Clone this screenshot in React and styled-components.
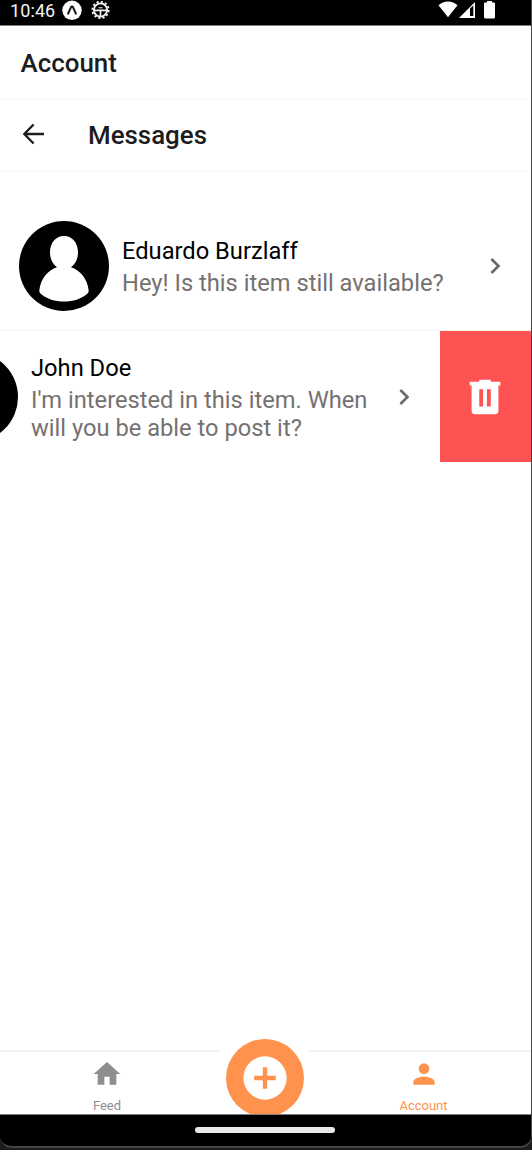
import React from "react";
import styled, { createGlobalStyle } from "styled-components";

const Global = createGlobalStyle`
  * { box-sizing: border-box; }
  body { margin: 0; background: #1c1c1c; font-family: Roboto, "Liberation Sans", sans-serif; }
  svg { display: block; flex: none; }
`;

const Phone = styled.div`
  width: 532px;
  height: 1148px;
  display: flex;
  flex-direction: column;
  overflow: hidden;
  background: #000;
  border: solid #444;
  border-width: 0 1px 2px 0;
  border-radius: 0 0 12px 12px;
`;

const StatusBar = styled.div`
  flex: none;
  height: 25px;
  display: flex;
  align-items: flex-start;
  padding: 0 36px 0 10px;
  color: #f4f4f4;
  background: #000;
`;

const Clock = styled.span`
  width: 52px;
  font-size: 18px;
  line-height: 22px;
  letter-spacing: 0.1px;
  white-space: nowrap;
`;

const StatusGroup = styled.div`
  display: flex;
  gap: ${(p) => p.$gap}px;
  margin-left: ${(p) => (p.$end ? "auto" : 0)};
`;

const Screen = styled.main`
  flex: 1;
  min-height: 0;
  display: flex;
  flex-direction: column;
  background: #fff;
  border-top: 1px solid #808080;
`;

const Header = styled.header`
  flex: none;
  height: ${(p) => p.$height}px;
  display: flex;
  align-items: center;
  gap: 39.5px;
  padding: ${(p) => p.$top || 0}px 20px 0 20.5px;
  border-bottom: 2px solid #fafafa;
`;

const Title = styled.h1`
  margin: 0;
  font-size: 25.9px;
  line-height: 32px;
  font-weight: 500;
  color: #1c1c1e;
`;

const List = styled.div`
  flex: 1;
  padding-top: 28px;
`;

const Row = styled.div`
  height: 131px;
  display: flex;
  overflow: hidden;
  border-bottom: ${(p) => (p.$last ? "none" : "1px solid #f6f6f6")};
`;

const Item = styled.div`
  flex: none;
  width: 531px;
  height: 131px;
  margin-left: ${(p) => (p.$swiped ? "-91px" : 0)};
  display: flex;
  align-items: center;
  padding: 0 20px 0 19px;
`;

const Details = styled.div`
  flex: 1;
  padding: 0 8px 0 13px;
  font-size: 23.7px;
  font-weight: 400;
`;

const Name = styled.div`
  color: #000;
  line-height: 32px;
`;

const Message = styled.div`
  color: #767171;
  line-height: 28px;
  padding-top: 2px;
`;

const DeleteAction = styled.button`
  flex: none;
  width: 91px;
  height: 131px;
  padding: 0 1px 0 0;
  border: 0;
  display: flex;
  align-items: center;
  justify-content: center;
  color: #fff;
  background: #ff5252;
`;

const TabBar = styled.nav`
  flex: none;
  height: 64px;
  display: flex;
  background: #fff;
`;

const Tab = styled.div`
  width: ${(p) => p.$width}px;
  display: flex;
  flex-direction: column;
  align-items: center;
  padding-top: 6px;
  padding-${(p) => p.$shift}: 7px;
  border-top: 2px solid #f3f3f3;
  color: ${(p) => (p.$active ? "#ff924c" : "#8e8e8e")};
`;

const TabLabel = styled.span`
  margin-top: 8px;
  font-size: 13px;
  line-height: 16px;
`;

const AddSlot = styled.div`
  width: 88px;
  display: flex;
  justify-content: center;
`;

const AddButton = styled.button`
  flex: none;
  width: 78px;
  height: 78px;
  margin-top: -11px;
  padding: 0;
  border: 0;
  border-radius: 50%;
  display: flex;
  align-items: center;
  justify-content: center;
  color: #fff;
  background: #ff924c;
`;

const GestureBar = styled.div`
  flex: none;
  position: relative;
  height: 32px;
  display: flex;
  justify-content: center;
  padding: 12px 2px 0 0;
  background: #000;
  border-top: 1px solid #808080;
`;

const Handle = styled.div`
  width: 140px;
  height: 6px;
  border-radius: 3px;
  background: #e8e8e8;
`;

const paths = {
  chevron: "M8.59,16.58L13.17,12L8.59,7.41L10,6L16,12L10,18L8.59,16.58Z",
  trash:
    "M9,3V4H4V6H5V19A2,2 0 0,0 7,21H17A2,2 0 0,0 19,19V6H20V4H15V3H9M9,8H11V17H9V8M13,8H15V17H13V8Z",
  home: "M10,20V14H14V20H19V12H22L12,3L2,12H5V20H10Z",
  account:
    "M12,4A4,4 0 0,1 16,8A4,4 0 0,1 12,12A4,4 0 0,1 8,8A4,4 0 0,1 12,4M12,14C16.42,14 20,15.79 20,18V20H4V18C4,15.79 7.58,14 12,14Z",
  plusCircle:
    "M17,13H13V17H11V13H7V11H11V7H13V11H17M12,2A10,10 0 0,0 2,12A10,10 0 0,0 12,22A10,10 0 0,0 22,12A10,10 0 0,0 12,2Z",
};

const Icon = ({ name, size, color = "currentColor" }) => (
  <svg width={size} height={size} viewBox="0 0 24 24" fill={color}>
    <path d={paths[name]} />
  </svg>
);

const BackArrow = () => (
  <svg width="28" height="28" viewBox="0 0 28 28" fill="none" stroke="#1c1c1e" strokeWidth="2.3">
    <path d="M23 13H4M12.6 3.5L3.3 13L12.6 22.5" />
  </svg>
);

const Avatar = () => (
  <svg width="90" height="90" viewBox="0 0 90 90">
    <circle cx="45" cy="45" r="45" fill="#000" />
    <path
      fill="#fff"
      d="M45 15C36.5 15 31 22 31 31.5C31 38 33.8 43 38 46.3C29 49 21.5 58 20.3 69.5C20.3 71 20.8 72 22 73C28 78 36 80.6 45 80.6C54 80.6 62 78 68 73C69.2 72 69.7 71 69.7 69.5C68.5 58 61 49 52 46.3C56.2 43 59 38 59 31.5C59 22 53.5 15 45 15Z"
    />
  </svg>
);

const ExpoBadge = () => (
  <svg width="20" height="21" viewBox="0 0 20 21">
    <circle cx="10" cy="10.3" r="9.7" fill="#fff" />
    <path d="M5.8 14.3L9 7.2Q10 5.6 11 7.2L14.2 14.3" fill="none" stroke="#111" strokeWidth="2" />
  </svg>
);

const GearBadge = () => (
  <svg width="20" height="20" viewBox="0 0 20 20" fill="none" stroke="#f4f4f4">
    <circle cx="9.5" cy="10" r="6.6" strokeWidth="1.9" />
    <circle cx="9.5" cy="10" r="8.2" strokeWidth="1.8" strokeDasharray="2.2 2.093" />
    <path d="M3.5 10.3H15.5M9.5 10.3V16" strokeWidth="1.7" />
    <path d="M7.5 7.8H11.5" strokeWidth="1" />
  </svg>
);

const Wifi = () => (
  <svg width="20" height="18" viewBox="0 0 20 18" fill="#fff">
    <path d="M0.5 5.3C5.5 0.2 14.5 0.2 19.5 5.3L10 17.3Z" />
  </svg>
);

const Signal = () => (
  <svg width="16" height="18" viewBox="0 0 16 18">
    <path d="M0 18L16 2V18Z" fill="#fff" />
    <path d="M11 8.5L14.3 5.5V16H11Z" fill="#000" />
  </svg>
);

const Battery = () => (
  <svg width="11" height="19" viewBox="0 0 11 19" fill="#fff">
    <path d="M3 1H8V2.5H10Q11 2.5 11 3.5V17Q11 18.5 9.5 18.5H1.5Q0 18.5 0 17V3.5Q0 2.5 1 2.5H3Z" />
  </svg>
);

const conversations = [
  { name: "Eduardo Burzlaff", text: "Hey! Is this item still available?" },
  {
    name: "John Doe",
    text: "I'm interested in this item. When will you be able to post it?",
    swiped: true,
  },
];

export default function App() {
  return (
    <>
      <Global />
      <Phone>
        <StatusBar>
          <Clock>10:46</Clock>
          <StatusGroup $gap={9}>
            <ExpoBadge />
            <GearBadge />
          </StatusGroup>
          <StatusGroup $gap={1} $end>
            <Wifi />
            <StatusGroup $gap={9}>
              <Signal />
              <Battery />
            </StatusGroup>
          </StatusGroup>
        </StatusBar>
        <Screen>
          <Header $height={74} $top={2}>
            <Title>Account</Title>
          </Header>
          <Header $height={72}>
            <BackArrow />
            <Title as="h2">Messages</Title>
          </Header>
          <List>
            {conversations.map((c) => (
              <Row key={c.name} $last={c.swiped}>
                <Item $swiped={c.swiped}>
                  <Avatar />
                  <Details>
                    <Name>{c.name}</Name>
                    <Message>{c.text}</Message>
                  </Details>
                  <Icon name="chevron" size={32} color="#6e6969" />
                </Item>
                {c.swiped && (
                  <DeleteAction aria-label="Delete">
                    <Icon name="trash" size={46} />
                  </DeleteAction>
                )}
              </Row>
            ))}
          </List>
        </Screen>
        <TabBar>
          <Tab $width={221} $shift="right">
            <Icon name="home" size={32} />
            <TabLabel>Feed</TabLabel>
          </Tab>
          <AddSlot>
            <AddButton aria-label="Add">
              <Icon name="plusCircle" size={52} />
            </AddButton>
          </AddSlot>
          <Tab $width={222} $shift="left" $active>
            <Icon name="account" size={32} />
            <TabLabel>Account</TabLabel>
          </Tab>
        </TabBar>
        <GestureBar>
          <Handle />
        </GestureBar>
      </Phone>
    </>
  );
}
